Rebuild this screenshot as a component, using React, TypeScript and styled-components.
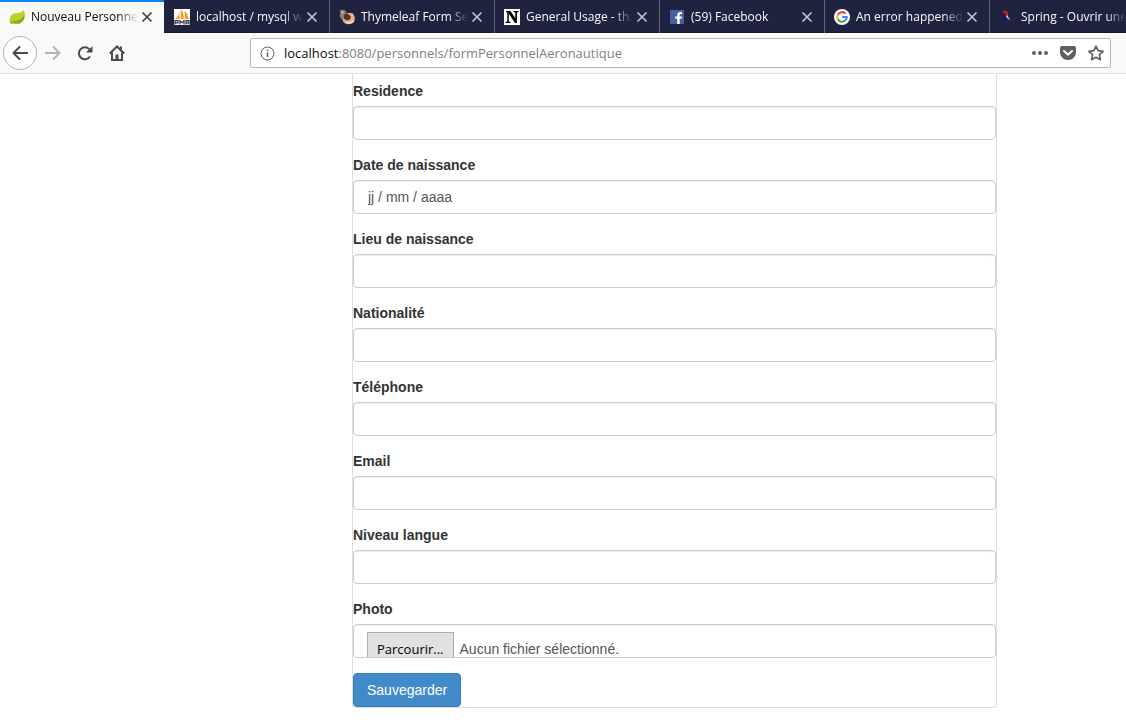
import React from "react";
import styled, { createGlobalStyle, css } from "styled-components";

const GlobalStyle = createGlobalStyle`
  *, *::before, *::after { box-sizing: border-box; }
  body {
    margin: 0;
    background: #fff;
    color: #333;
    font: 14px/20px "Liberation Sans", Arial, sans-serif;
  }
  button, input { font: inherit; }
`;

const chromeFont = css`
  font-family: "Open Sans", "Noto Sans", sans-serif;
`;

const TabStrip = styled.div`
  ${chromeFont}
  display: flex;
  height: 33px;
  overflow: hidden;
  background: #202340;
  box-shadow: inset 0 -1px 0 #14162b;
`;

const Tab = styled.div<{ $active?: boolean; $divided?: boolean; $last?: boolean }>`
  display: flex;
  flex: 0 ${(p) => (p.$last ? 1 : 0)} ${(p) => (p.$active ? 164 : 165)}px;
  min-width: 0;
  align-items: center;
  padding: 0 ${(p) => (p.$last ? 0 : 11)}px 0 9px;
  border-left: ${(p) => (p.$active ? 0 : 1)}px solid ${(p) => (p.$divided ? "#63657a" : "transparent")};
  background: ${(p) => (p.$active ? "#f9f9fa" : "transparent")};
  box-shadow: ${(p) => (p.$active ? "inset 0 2px 0 #0a84ff" : "none")};
  color: ${(p) => (p.$active ? "#0c0c0d" : "#f9f9fa")};
`;

const TabIcon = styled.svg`
  flex: none;
  width: 16px;
  height: 16px;
  margin-right: 6px;
`;

const TabTitle = styled.span`
  flex: 1;
  min-width: 0;
  overflow: hidden;
  font-size: 12px;
  line-height: 20px;
  white-space: nowrap;
  mask-image: linear-gradient(to left, transparent, #000 20px);
`;

const TabClose = styled.button<{ $active?: boolean }>`
  display: flex;
  flex: none;
  margin-left: 3px;
  padding: 0;
  border: 0;
  background: none;
  color: ${(p) => (p.$active ? "#3a3a3c" : "#c6c7d0")};
`;

const Toolbar = styled.div`
  ${chromeFont}
  display: flex;
  align-items: center;
  height: 41px;
  padding: 0 15px 0 3px;
  border-bottom: 1px solid #e0e0e1;
  background: #f9f9fa;
`;

const ToolButton = styled.button<{ $round?: boolean; $muted?: boolean }>`
  display: flex;
  flex: none;
  align-items: center;
  justify-content: center;
  width: ${(p) => (p.$round ? 34 : 32)}px;
  height: 34px;
  padding: 0;
  border: ${(p) => (p.$round ? "1px solid #b3b3b5" : "0")};
  border-radius: 50%;
  background: ${(p) => (p.$round ? "#fdfdfd" : "none")};
  color: ${(p) => (p.$muted ? "#b4b4b5" : "#4a4a4c")};
`;

const Spacer = styled.div`
  flex: 117 1 0;
`;

const AddressBar = styled.div`
  display: flex;
  flex: 844 1 0;
  align-items: center;
  height: 30px;
  padding: 0 6px 0 9px;
  border: 1px solid #b8b8ba;
  border-radius: 2px;
  background: #fff;
  color: #5f5f61;
`;

const Address = styled.div`
  flex: 1;
  min-width: 0;
  margin-left: 9px;
  overflow: hidden;
  color: #808082;
  font-size: 13px;
  line-height: 20px;
  white-space: nowrap;
`;

const Host = styled.span`
  color: #0c0c0d;
`;

const AddressActions = styled.div`
  display: flex;
  gap: 12px;
`;

const AddressButton = styled.button`
  display: flex;
  padding: 0;
  border: 0;
  background: none;
  color: #5f5f61;
`;

const Page = styled.main`
  display: grid;
  grid-template-columns: 352fr 645fr 129fr;
`;

const Panel = styled.form`
  grid-column: 2;
  padding-top: 7px;
  border: 1px solid #ddd;
  border-top: 0;
  border-radius: 0 0 4px 4px;
  box-shadow: 0 1px 1px rgba(0, 0, 0, 0.05);
`;

const Field = styled.div`
  margin-bottom: 15px;
`;

const FieldLabel = styled.label`
  display: block;
  width: fit-content;
  margin-bottom: 5px;
  font-weight: 700;
`;

const control = css`
  display: block;
  width: 100%;
  height: 34px;
  border: 1px solid #ccc;
  border-radius: 4px;
  background: #fff;
  box-shadow: inset 0 1px 1px rgba(0, 0, 0, 0.075);
  color: #555;
`;

const TextInput = styled.input`
  ${control}
  padding: 6px 14px;
  &::placeholder { color: #555; opacity: 1; }
`;

const FileControl = styled.div`
  ${control}
  position: relative;
  display: flex;
  gap: 6px;
  padding: 7px 13px 0;
  overflow: hidden;
`;

const FileInput = styled.input`
  position: absolute;
  inset: 0;
  opacity: 0;
`;

const BrowseFace = styled.span`
  ${chromeFont}
  flex: none;
  height: 34px;
  padding: 0 9px;
  border: 1px solid #adadad;
  background: #e1e1e1;
  color: #000;
  font-size: 13px;
  line-height: 32px;
`;

const FileStatus = styled.span`
  line-height: 34px;
`;

const SubmitButton = styled.button`
  display: block;
  height: 34px;
  padding: 6px 13px;
  border: 1px solid #357ebd;
  border-radius: 4px;
  background: #428bca;
  color: #fff;
`;

const LeafIcon = () => (
  <TabIcon viewBox="0 0 16 16" aria-hidden="true">
    <path d="M14.8 1C16 4 16.3 8 14.5 11.2C12.5 14.6 8.5 15.5 4.500 14.3C2 15.2 1 14.5.8 13C.2 9.500 1 6.500 4 5C7.500 3.300 12.300 4.500 14.800 1Z" fill="#bfd02a" />
    <path d="M15.200 5C14 9 11.500 10.500 7 11.500C4 12.200 2.500 12.700 1 14C2 15.200 3.500 14.600 4.500 14.300C8.500 15.500 12.500 14.600 14.500 11.200C15.600 9.300 15.700 7 15.200 5Z" fill="#8fae1c" />
  </TabIcon>
);

const PmaIcon = () => (
  <TabIcon viewBox="0 0 16 16" aria-hidden="true">
    <path d="M0 0H16V16H0Z" fill="#fff" />
    <path d="M5.500 1.500C5.700 5 4 8 1 10H5.500ZM6.800 .5C9.500 3 10 7 9.700 10H6.800ZM10.500 2C13.500 4 14.300 8 14.800 10H11Z" fill="#f59b1e" />
    <path d="M1 15.500V11.700H4V13.800H1M6 15.500V11.700L8 13.700L10 11.700V15.500M12 15.500V11.700H15V15.500M12 13.800H15" fill="none" stroke="#33334d" strokeWidth="1.200" />
  </TabIcon>
);

const PortraitIcon = () => (
  <TabIcon viewBox="0 0 16 16" aria-hidden="true">
    <path d="M4 4L13 4C16 6 16.500 10 15 13C12 16 7 16 4.500 13C3 11 2.500 7 4 4Z" fill="#dcb58f" />
    <path d="M1 1.500C3 .2 6 .5 7.500 3L5 6L5.500 9L3.500 11C1.500 9 1.200 8 .5 6C2 5 1 3 1 1.500Z" fill="#8d7b78" />
    <path d="M2 3L4 2L5 4L3 5Z" fill="#c9bcb8" />
    <path d="M7 4L10 5.500L12 8L10.500 11L7 11.500L5 9.500L5 6Z" fill="#5a3526" />
    <path d="M7 13C9 14.300 12 14 14 12" fill="none" stroke="#f6dfc0" strokeWidth="1.500" />
  </TabIcon>
);

const SerifNIcon = () => (
  <TabIcon viewBox="0 0 16 16" aria-hidden="true">
    <path d="M0 0H16V16H0Z" fill="#fff" />
    <path d="M2 2H6.500L11.300 9.200V3.400L9.500 3V2H14.500V3L13 3.400V14H11L4.800 4.800V12.600L6.500 13V14H1.500V13L3.300 12.600V3.400L2 3Z" fill="#000" />
  </TabIcon>
);

const FacebookIcon = () => (
  <TabIcon viewBox="0 0 16 16" aria-hidden="true">
    <path d="M1 1H15V15H1Z" fill="#4460a0" />
    <path d="M8.200 15V9.700H6.300V7.500H8.200V6C8.200 4 9.400 3 11.200 3H13V5.200H11.800C11 5.200 10.700 5.600 10.700 6.300V7.500H13L12.700 9.700H10.700V15Z" fill="#fff" />
  </TabIcon>
);

const GoogleIcon = () => (
  <TabIcon viewBox="0 0 16 16" aria-hidden="true">
    <circle cx="8" cy="8" r="8" fill="#fff" />
    <g fill="none" strokeWidth="2">
      <path d="M11.500 4.600A4.800 4.800 0 0 0 3.800 5.700" stroke="#ea4335" />
      <path d="M3.800 5.700A4.800 4.800 0 0 0 3.800 10.300" stroke="#fbbc05" />
      <path d="M3.800 10.300A4.800 4.800 0 0 0 11.200 11.600" stroke="#34a853" />
      <path d="M11.200 11.600A4.800 4.800 0 0 0 12.800 8H8.200" stroke="#4285f4" />
    </g>
  </TabIcon>
);

const RibbonIcon = () => (
  <TabIcon viewBox="0 0 16 16" aria-hidden="true">
    <path d="M4.500 3.500C5.500 2.300 7.500 2.300 7.800 4V6.500" fill="none" stroke="#f01818" strokeWidth="2" />
    <path d="M7.500 6.500L9 9L11 10.500" fill="none" stroke="#c9d4ee" strokeWidth="1.500" />
    <path d="M9.500 9L12.500 12.500" fill="none" stroke="#e02020" strokeWidth="1" />
    <path d="M5 8V11.500L8 9M11 11L13.500 12.500" fill="none" stroke="#10108c" strokeWidth="1.300" />
  </TabIcon>
);

const CloseGlyph = () => (
  <svg width="12" height="12" viewBox="0 0 12 12" aria-hidden="true">
    <path d="M1.500 1.500L10.500 10.500M10.500 1.500L1.500 10.500" stroke="currentColor" strokeWidth="1.600" />
  </svg>
);

const Glyph = ({ children }: { children: React.ReactNode }) => (
  <svg width="16" height="16" viewBox="0 0 16 16" fill="none" stroke="currentColor" strokeWidth="2" aria-hidden="true">
    {children}
  </svg>
);

const tabs = [
  { title: "Nouveau Personnel", Icon: LeafIcon },
  { title: "localhost / mysql wa", Icon: PmaIcon },
  { title: "Thymeleaf Form Sel", Icon: PortraitIcon },
  { title: "General Usage - th:fi", Icon: SerifNIcon },
  { title: "(59) Facebook", Icon: FacebookIcon },
  { title: "An error happened c", Icon: GoogleIcon },
  { title: "Spring - Ouvrir une", Icon: RibbonIcon },
];

const fields = [
  { id: "residence", label: "Residence" },
  { id: "dateNaissance", label: "Date de naissance", placeholder: "jj / mm / aaaa" },
  { id: "lieuNaissance", label: "Lieu de naissance" },
  { id: "nationalite", label: "Nationalité" },
  { id: "telephone", label: "Téléphone", type: "tel" },
  { id: "email", label: "Email", type: "email" },
  { id: "niveauLangue", label: "Niveau langue" },
];

export default function App() {
  return (
    <>
      <GlobalStyle />
      <TabStrip>
        {tabs.map(({ title, Icon }, i) => {
          const last = i === tabs.length - 1;
          return (
            <Tab key={title} $active={i === 0} $divided={i > 1} $last={last}>
              <Icon />
              <TabTitle>{title}</TabTitle>
              {!last && (
                <TabClose type="button" $active={i === 0} aria-label="Fermer l’onglet">
                  <CloseGlyph />
                </TabClose>
              )}
            </Tab>
          );
        })}
      </TabStrip>
      <Toolbar>
        <ToolButton type="button" $round aria-label="Précédent">
          <Glyph><path d="M15.500 8H1.500M7.500 2L1.500 8L7.500 14" strokeLinecap="round" strokeLinejoin="round" /></Glyph>
        </ToolButton>
        <ToolButton type="button" $muted aria-label="Suivant">
          <Glyph><path d="M.5 8H14.500M8.500 2L14.500 8L8.500 14" strokeLinecap="round" strokeLinejoin="round" /></Glyph>
        </ToolButton>
        <ToolButton type="button" aria-label="Actualiser">
          <Glyph>
            <path d="M13 11.500A6 6 0 1 1 12.500 4.300" />
            <path d="M15.500 1V7.500H9Z" fill="currentColor" stroke="none" />
          </Glyph>
        </ToolButton>
        <ToolButton type="button" aria-label="Accueil">
          <Glyph>
            <path d="M.8 8.500L8 1.500L15.200 8.500M3 7.500V15H13V7.500" />
            <path d="M6.500 15V9.500H9.500V15M11 1.500H13V5L11 3.500Z" fill="currentColor" stroke="none" />
          </Glyph>
        </ToolButton>
        <Spacer />
        <AddressBar>
          <svg width="15" height="15" viewBox="0 0 15 15" aria-hidden="true">
            <circle cx="7.500" cy="7.500" r="6.500" fill="none" stroke="currentColor" />
            <path d="M7.500 6.500V11M7.500 3.800V5.300" stroke="currentColor" strokeWidth="1.500" />
          </svg>
          <Address><Host>localhost</Host>:8080/personnels/formPersonnelAeronautique</Address>
          <AddressActions>
            <AddressButton type="button" aria-label="Actions de la page">
              <svg width="16" height="16" viewBox="0 0 16 16" fill="currentColor" aria-hidden="true">
                <circle cx="2" cy="8" r="2" /><circle cx="8" cy="8" r="2" /><circle cx="14" cy="8" r="2" />
              </svg>
            </AddressButton>
            <AddressButton type="button" aria-label="Enregistrer dans Pocket">
              <svg width="16" height="16" viewBox="0 0 16 16" aria-hidden="true">
                <path d="M2 1H14C15.200 1 16 1.800 16 3V7C16 11.500 12.500 15 8 15S0 11.500 0 7V3C0 1.800.8 1 2 1Z" fill="currentColor" />
                <path d="M4 6L8 9.700L12 6" fill="none" stroke="#fff" strokeWidth="2" strokeLinecap="round" strokeLinejoin="round" />
              </svg>
            </AddressButton>
            <AddressButton type="button" aria-label="Marquer cette page">
              <svg width="16" height="16" viewBox="0 0 16 16" fill="none" stroke="currentColor" strokeWidth="1.700" strokeLinejoin="round" aria-hidden="true">
                <path d="M8 1.200L10.100 5.700L15.100 6.300L11.400 9.700L12.400 14.700L8 12.200L3.600 14.700L4.600 9.700L.9 6.300L5.900 5.700Z" />
              </svg>
            </AddressButton>
          </AddressActions>
        </AddressBar>
      </Toolbar>
      <Page>
        <Panel onSubmit={(e: React.FormEvent) => e.preventDefault()}>
          {fields.map(({ id, label, placeholder, type = "text" }) => (
            <Field key={id}>
              <FieldLabel htmlFor={id}>{label}</FieldLabel>
              <TextInput id={id} name={id} type={type} placeholder={placeholder} />
            </Field>
          ))}
          <Field>
            <FieldLabel htmlFor="photo">Photo</FieldLabel>
            <FileControl>
              <BrowseFace>Parcourir...</BrowseFace>
              <FileStatus>Aucun fichier sélectionné.</FileStatus>
              <FileInput id="photo" name="photo" type="file" />
            </FileControl>
          </Field>
          <SubmitButton type="submit">Sauvegarder</SubmitButton>
        </Panel>
      </Page>
    </>
  );
}
